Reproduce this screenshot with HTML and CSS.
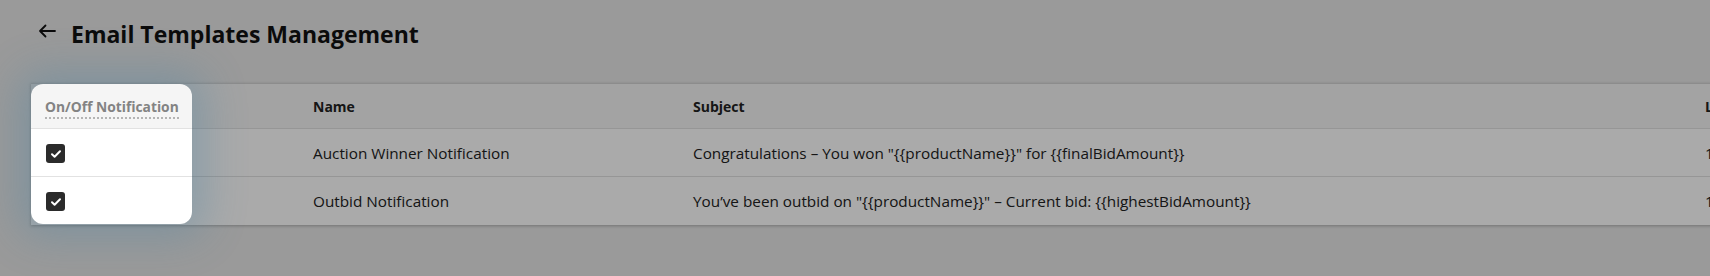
FILE: index.html
```html
<!DOCTYPE html>
<html lang="en">
<head>
<meta charset="utf-8">
<title>Email Templates Management</title>
<link rel="stylesheet" href="styles.css">
</head>
<body>
<header class="page-header">
  <span class="back" aria-label="Back">
    <svg width="18" height="14" viewBox="0 0 18 14"><path d="M17 7H2M7.5 1.5L2 7l5.5 5.5" fill="none" stroke="#111" stroke-width="1.8" stroke-linecap="round" stroke-linejoin="round"/></svg>
  </span>
  <h1 class="title">Email Templates Management</h1>
</header>
<main class="table-wrap">
  <table class="templates">
    <colgroup>
      <col class="c-toggle"><col class="c-gap"><col class="c-name"><col class="c-subject"><col class="c-updated">
    </colgroup>
    <thead>
      <tr>
        <th><span class="tip">On/Off Notification</span></th>
        <th></th>
        <th>Name</th>
        <th>Subject</th>
        <th>Last Updated</th>
      </tr>
    </thead>
    <tbody>
      <tr>
        <td><span class="check"><svg width="12" height="10" viewBox="0 0 12 10"><path d="M2 5.2l2.6 2.5L10 2.3" fill="none" stroke="#fff" stroke-width="2" stroke-linecap="round" stroke-linejoin="round"/></svg></span></td>
        <td></td>
        <td>Auction Winner Notification</td>
        <td>Congratulations – You won "{{productName}}" for {{finalBidAmount}}</td>
        <td>12/05/2024</td>
      </tr>
      <tr>
        <td><span class="check"><svg width="12" height="10" viewBox="0 0 12 10"><path d="M2 5.2l2.6 2.5L10 2.3" fill="none" stroke="#fff" stroke-width="2" stroke-linecap="round" stroke-linejoin="round"/></svg></span></td>
        <td></td>
        <td>Outbid Notification</td>
        <td>You’ve been outbid on "{{productName}}" – Current bid: {{highestBidAmount}}</td>
        <td>12/05/2024</td>
      </tr>
    </tbody>
  </table>
</main>
<div class="spotlight"></div>
</body>
</html>
```
FILE: styles.css
```css
html, body {
  margin: 0;
  height: 100%;
  overflow: hidden;
}
body {
  background: #e7e7e7;
  font-family: "Open Sans", "Noto Sans", Arial, sans-serif;
  color: #222;
}
.page-header {
  height: 68px;
  display: flex;
  align-items: center;
  gap: 15px;
  padding-left: 38px;
}
.back {
  display: flex;
  align-items: center;
  margin-top: -6px;
}
.title {
  margin: 0;
  font-size: 23px;
  font-weight: 700;
  color: #111;
  letter-spacing: 0;
}
.table-wrap {
  margin-top: 15px;
  padding-left: 31px;
}
.templates {
  border-collapse: collapse;
  table-layout: fixed;
  width: 1960px;
  background: #fff;
  box-shadow: 0 1px 3px rgba(0,0,0,0.25);
}
.c-toggle { width: 161px; }
.c-gap { width: 107px; }
.c-name { width: 380px; }
.c-subject { width: 1012px; }
.c-updated { width: 300px; }
.templates th,
.templates td {
  text-align: left;
  padding: 0 14px;
  white-space: nowrap;
  overflow: hidden;
}
.templates thead tr {
  height: 45px;
  background: #f5f5f5;
  border-top: 1px solid #d2d2d2;
}
.templates th {
  font-size: 14px;
  font-weight: 700;
  color: #222;
}
.templates tbody tr {
  height: 48px;
  border-top: 1px solid #e2e2e2;
}
.templates td {
  font-size: 15.3px;
}
.tip {
  color: #838383;
  font-size: 13.8px;
  font-weight: 700;
  border-bottom: 2px dotted #b4b4b4;
  padding-bottom: 1px;
}
.check {
  display: inline-flex;
  align-items: center;
  justify-content: center;
  width: 19px;
  height: 19px;
  border-radius: 3px;
  background: #2b2b2b;
  vertical-align: middle;
  margin-left: 1px;
}
.spotlight {
  position: absolute;
  left: 31px;
  top: 84px;
  width: 161px;
  height: 140px;
  border-radius: 12px;
  box-shadow: 0 0 40px 14px rgba(70, 130, 165, 0.32), 0 0 0 3000px rgba(0, 0, 0, 0.335);
  pointer-events: none;
}
```
